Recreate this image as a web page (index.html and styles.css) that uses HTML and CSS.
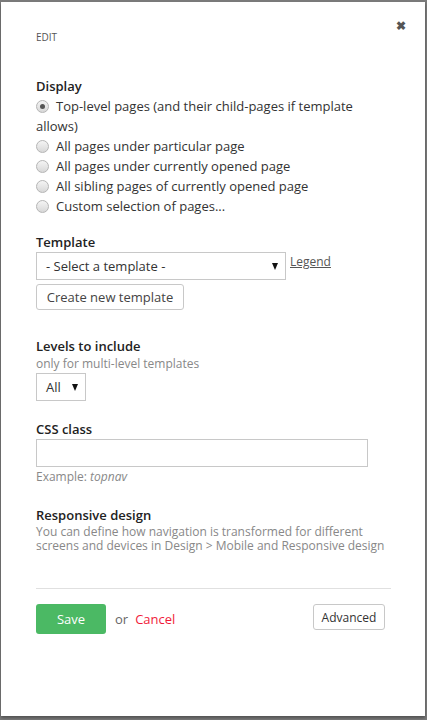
FILE: index.html
```html
<!DOCTYPE html>
<html>
<head>
<meta charset="utf-8">
<link rel="stylesheet" href="styles.css">
</head>
<body>
<div class="panel">
  <div class="header">
    <span class="title">EDIT</span>
    <span class="close">&#10006;</span>
  </div>

  <div class="section display">
    <div class="label">Display</div>
    <div class="radio-line"><span class="radio checked"></span>Top-level pages (and their child-pages if template allows)</div>
    <div class="radio-line"><span class="radio"></span>All pages under particular page</div>
    <div class="radio-line"><span class="radio"></span>All pages under currently opened page</div>
    <div class="radio-line"><span class="radio"></span>All sibling pages of currently opened page</div>
    <div class="radio-line"><span class="radio"></span>Custom selection of pages...</div>
  </div>

  <div class="section template">
    <div class="label">Template</div>
    <div class="select-row">
      <div class="select wide"><span>- Select a template -</span><span class="arrow"></span></div>
      <a class="legend">Legend</a>
    </div>
    <button class="btn create">Create new template</button>
  </div>

  <div class="section levels">
    <div class="label">Levels to include</div>
    <div class="hint">only for multi-level templates</div>
    <div class="select small"><span>All</span><span class="arrow"></span></div>
  </div>

  <div class="section cssclass">
    <div class="label">CSS class</div>
    <div class="input"></div>
    <div class="hint example">Example: <em>topnav</em></div>
  </div>

  <div class="section responsive">
    <div class="label">Responsive design</div>
    <div class="hint para">You can define how navigation is transformed for different screens and devices in Design &gt; Mobile and Responsive design</div>
  </div>

  <div class="footer">
    <div class="actions">
      <button class="btn save">Save</button>
      <span class="or">or</span>
      <a class="cancel">Cancel</a>
    </div>
    <button class="btn advanced">Advanced</button>
  </div>
</div>
</body>
</html>
```
FILE: styles.css
```css
html, body {
  margin: 0;
  padding: 0;
  background: #7b7b7b;
  height: 720px;
  overflow: hidden;
}
body {
  font-family: "Open Sans", "Noto Sans", sans-serif;
  color: #333;
  font-size: 13px;
}
.panel {
  background: #fff;
  margin: 2px 2px 0 1px;
  height: 714px;
  box-sizing: border-box;
  padding: 28px 36px 0 35px;
  box-shadow: 0 2px 3px rgba(0,0,0,0.35);
}
.header {
  position: relative;
  height: 14px;
}
.title {
  display: block;
  font-size: 10px;
  line-height: 14px;
  color: #555;
}
.close {
  position: absolute;
  right: -17px;
  top: -11px;
  font-size: 12px;
  font-weight: bold;
  color: #555;
  line-height: 14px;
}
.display {
  margin-top: 32px;
}
.label {
  font-weight: 600;
  color: #222;
  line-height: 20px;
  font-size: 13px;
}
.radio-line {
  line-height: 20px;
  color: #333;
}
.radio {
  display: inline-block;
  width: 11px;
  height: 11px;
  border: 1px solid #b5b5b5;
  border-radius: 50%;
  background: linear-gradient(#f4f4f4, #d8d8d8);
  vertical-align: -2px;
  margin-right: 7px;
  position: relative;
  box-sizing: content-box;
}
.radio.checked::after {
  content: "";
  position: absolute;
  left: 3px;
  top: 3px;
  width: 5px;
  height: 5px;
  border-radius: 50%;
  background: #555;
}
.template {
  margin-top: 17px;
}
.template .label {
  line-height: 18px;
}
.select-row {
  display: flex;
  align-items: flex-start;
  gap: 4px;
  margin-top: 1px;
}
.select {
  display: flex;
  align-items: center;
  justify-content: space-between;
  border: 1px solid #c8c8c8;
  box-sizing: border-box;
  height: 28px;
  padding: 0 7px 0 9px;
  color: #333;
}
.select.wide {
  width: 250px;
}
.select.small {
  width: 50px;
  margin-top: 1px;
}
.arrow {
  width: 0;
  height: 0;
  border-left: 3.5px solid transparent;
  border-right: 3.5px solid transparent;
  border-top: 7px solid #111;
  margin-top: 1px;
}
.legend {
  font-size: 12px;
  color: #555;
  text-decoration: underline;
  line-height: 16px;
  margin-top: 2px;
}
.btn {
  font-family: "Open Sans", "Noto Sans", sans-serif;
  background: #fff;
  border: 1px solid #c8c8c8;
  border-radius: 3px;
  color: #444;
  padding: 0;
  cursor: pointer;
}
.create {
  margin-top: 4px;
  width: 148px;
  height: 26px;
  font-size: 13px;
}
.levels {
  margin-top: 27px;
}
.levels .label {
  line-height: 18px;
}
.hint {
  font-size: 12px;
  color: #888;
  line-height: 17px;
}
.cssclass {
  margin-top: 19px;
}
.cssclass .label {
  line-height: 18px;
}
.input {
  width: 332px;
  height: 28px;
  margin-top: 1px;
  border: 1px solid #c8c8c8;
  box-sizing: border-box;
}
.example {
  margin-top: 1px;
  line-height: 18px;
}
.example em {
  font-style: italic;
}
.responsive {
  margin-top: 20px;
}
.responsive .label {
  line-height: 18px;
}
.para {
  line-height: 14px;
  margin-top: 1px;
  width: 360px;
}
.footer {
  margin-top: 35px;
  border-top: 1px solid #e0e0e0;
  padding-top: 15px;
  display: flex;
  justify-content: space-between;
  align-items: flex-start;
  width: 355px;
}
.actions {
  display: flex;
  align-items: center;
}
.save {
  width: 70px;
  height: 30px;
  background: #4bb964;
  border: none;
  color: #fff;
  font-size: 13px;
  border-radius: 3px;
}
.or {
  margin-left: 9px;
  color: #666;
  font-size: 13px;
}
.cancel {
  margin-left: 7px;
  color: #f11a3a;
  font-size: 13px;
}
.advanced {
  width: 72px;
  height: 26px;
  font-size: 12px;
  color: #333;
  margin-right: 6px;
}
```
